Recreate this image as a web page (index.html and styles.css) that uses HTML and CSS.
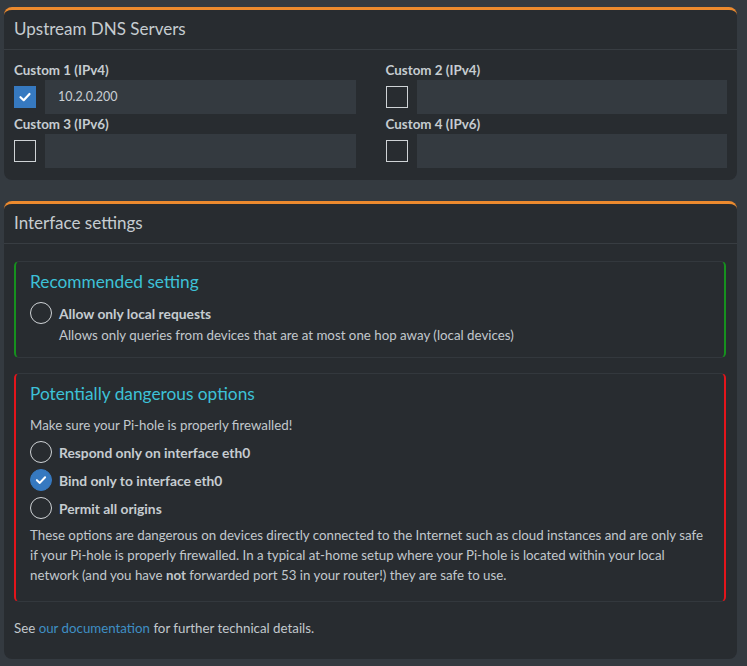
FILE: index.html
```html
<!DOCTYPE html>
<html>
<head>
<meta charset="utf-8">
<link rel="stylesheet" href="styles.css">
</head>
<body>
<div class="page">
  <section class="card">
    <header class="card-header">Upstream DNS Servers</header>
    <div class="card-body dns-grid">
      <div class="field">
        <label class="field-label">Custom 1 (IPv4)</label>
        <div class="field-row">
          <span class="checkbox checked"><svg viewBox="0 0 22 22" width="22" height="22"><path d="M6.5 11.2 L9.7 14.2 L15.5 8" fill="none" stroke="#fff" stroke-width="2.2" stroke-linecap="round" stroke-linejoin="round"/></svg></span>
          <div class="input">10.2.0.200</div>
        </div>
      </div>
      <div class="field">
        <label class="field-label">Custom 2 (IPv4)</label>
        <div class="field-row">
          <span class="checkbox"></span>
          <div class="input"></div>
        </div>
      </div>
      <div class="field">
        <label class="field-label">Custom 3 (IPv6)</label>
        <div class="field-row">
          <span class="checkbox"></span>
          <div class="input"></div>
        </div>
      </div>
      <div class="field">
        <label class="field-label">Custom 4 (IPv6)</label>
        <div class="field-row">
          <span class="checkbox"></span>
          <div class="input"></div>
        </div>
      </div>
    </div>
  </section>

  <section class="card">
    <header class="card-header">Interface settings</header>
    <div class="card-body iface-body">
      <div class="callout callout-success">
        <h4 class="callout-title">Recommended setting</h4>
        <div class="radio-row"><span class="radio"></span><span class="radio-label">Allow only local requests</span></div>
        <p class="radio-help">Allows only queries from devices that are at most one hop away (local devices)</p>
      </div>
      <div class="callout callout-danger">
        <h4 class="callout-title">Potentially dangerous options</h4>
        <p class="warn">Make sure your Pi-hole is properly firewalled!</p>
        <div class="radio-list">
          <div class="radio-row"><span class="radio"></span><span class="radio-label">Respond only on interface eth0</span></div>
          <div class="radio-row"><span class="radio checked"><svg viewBox="0 0 22 22" width="22" height="22"><path d="M6.5 11.2 L9.7 14.2 L15.5 8" fill="none" stroke="#fff" stroke-width="2.2" stroke-linecap="round" stroke-linejoin="round"/></svg></span><span class="radio-label">Bind only to interface eth0</span></div>
          <div class="radio-row"><span class="radio"></span><span class="radio-label">Permit all origins</span></div>
        </div>
        <p class="danger-text">These options are dangerous on devices directly connected to the Internet such as cloud instances and are only safe if your Pi-hole is properly firewalled. In a typical at-home setup where your Pi-hole is located within your local network (and you have <strong>not</strong> forwarded port 53 in your router!) they are safe to use.</p>
      </div>
      <p class="doc-note">See <a href="#" class="link">our documentation</a> for further technical details.</p>
    </div>
  </section>
</div>
</body>
</html>
```

FILE: styles.css
```css
* { box-sizing: border-box; }
html, body { margin: 0; padding: 0; }
body {
  background: #343a40;
  color: #c2c8cd;
  font-family: Lato, "Noto Sans", sans-serif;
  font-size: 13.3px;
  width: 747px;
  height: 666px;
  overflow: hidden;
}
.page {
  padding: 7px 10px 0 4px;
  display: flex;
  flex-direction: column;
  gap: 21px;
}
.card {
  background: #282c30;
  border-top: 3px solid #ec8a2e;
  border-radius: 8px;
}
.card-header {
  font-size: 17px;
  color: #c6ccd1;
  padding: 8px 10px 0 10px;
  height: 40px;
  border-bottom: 1px solid #383d42;
}
.card-body { padding: 10px 10px 12px 10px; }
.dns-grid {
  display: grid;
  grid-template-columns: 1fr 1fr;
  column-gap: 30px;
}
.field-label {
  display: block;
  font-weight: 700;
  font-size: 13.4px;
  height: 20px;
  line-height: 20px;
  color: #c6ccd1;
}
.field-row {
  display: flex;
  align-items: center;
  gap: 9px;
}
.checkbox {
  width: 22px;
  height: 22px;
  flex: none;
  border: 1.5px solid #cfd3d6;
  display: flex;
  align-items: center;
  justify-content: center;
}
.checkbox.checked {
  background: #3679c0;
  border-color: #3679c0;
}
.checkbox svg { flex: none; }
.input {
  flex: 1;
  height: 34px;
  background: #343a40;
  color: #c9cfd4;
  font-size: 12.5px;
  line-height: 34px;
  padding-left: 13px;
}
.iface-body { padding: 17px 11px 21px 10px; }
.callout {
  border-radius: 5px;
  border: 1px solid #33383d;
  border-left-width: 2px;
  border-right-width: 2px;
  padding: 9px 14px 12px 14px;
}
.callout-success { border-left-color: #16911e; border-right-color: #16911e; }
.callout-danger {
  border-left-color: #e3151b;
  border-right-color: #e3151b;
  margin-top: 15px;
  padding-bottom: 16px;
}
.callout-title {
  margin: 0;
  font-size: 17.3px;
  font-weight: 400;
  line-height: 22px;
  color: #3dc1d7;
}
.callout-success .radio-row { margin-top: 9px; }
.radio-row {
  display: flex;
  align-items: center;
  gap: 7px;
  height: 22px;
}
.radio {
  width: 22px;
  height: 22px;
  flex: none;
  border-radius: 50%;
  border: 1.5px solid #cfd3d6;
  display: flex;
  align-items: center;
  justify-content: center;
}
.radio.checked { background: #3679c0; border-color: #3679c0; }
.radio-label {
  font-weight: 700;
  font-size: 13.8px;
  color: #c6ccd1;
}
.radio-help {
  margin: 1px 0 0 29px;
  line-height: 20px;
}
.warn {
  margin: 10px 0 0;
  line-height: 20px;
}
.radio-list {
  display: flex;
  flex-direction: column;
  gap: 6px;
  margin-top: 6px;
}
.danger-text {
  margin: 6px 0 0;
  line-height: 20px;
}
.danger-text strong { font-weight: 700; }
.doc-note {
  margin: 16px 0 0;
  line-height: 20px;
}
.link { color: #3f8fc4; text-decoration: none; }
```
